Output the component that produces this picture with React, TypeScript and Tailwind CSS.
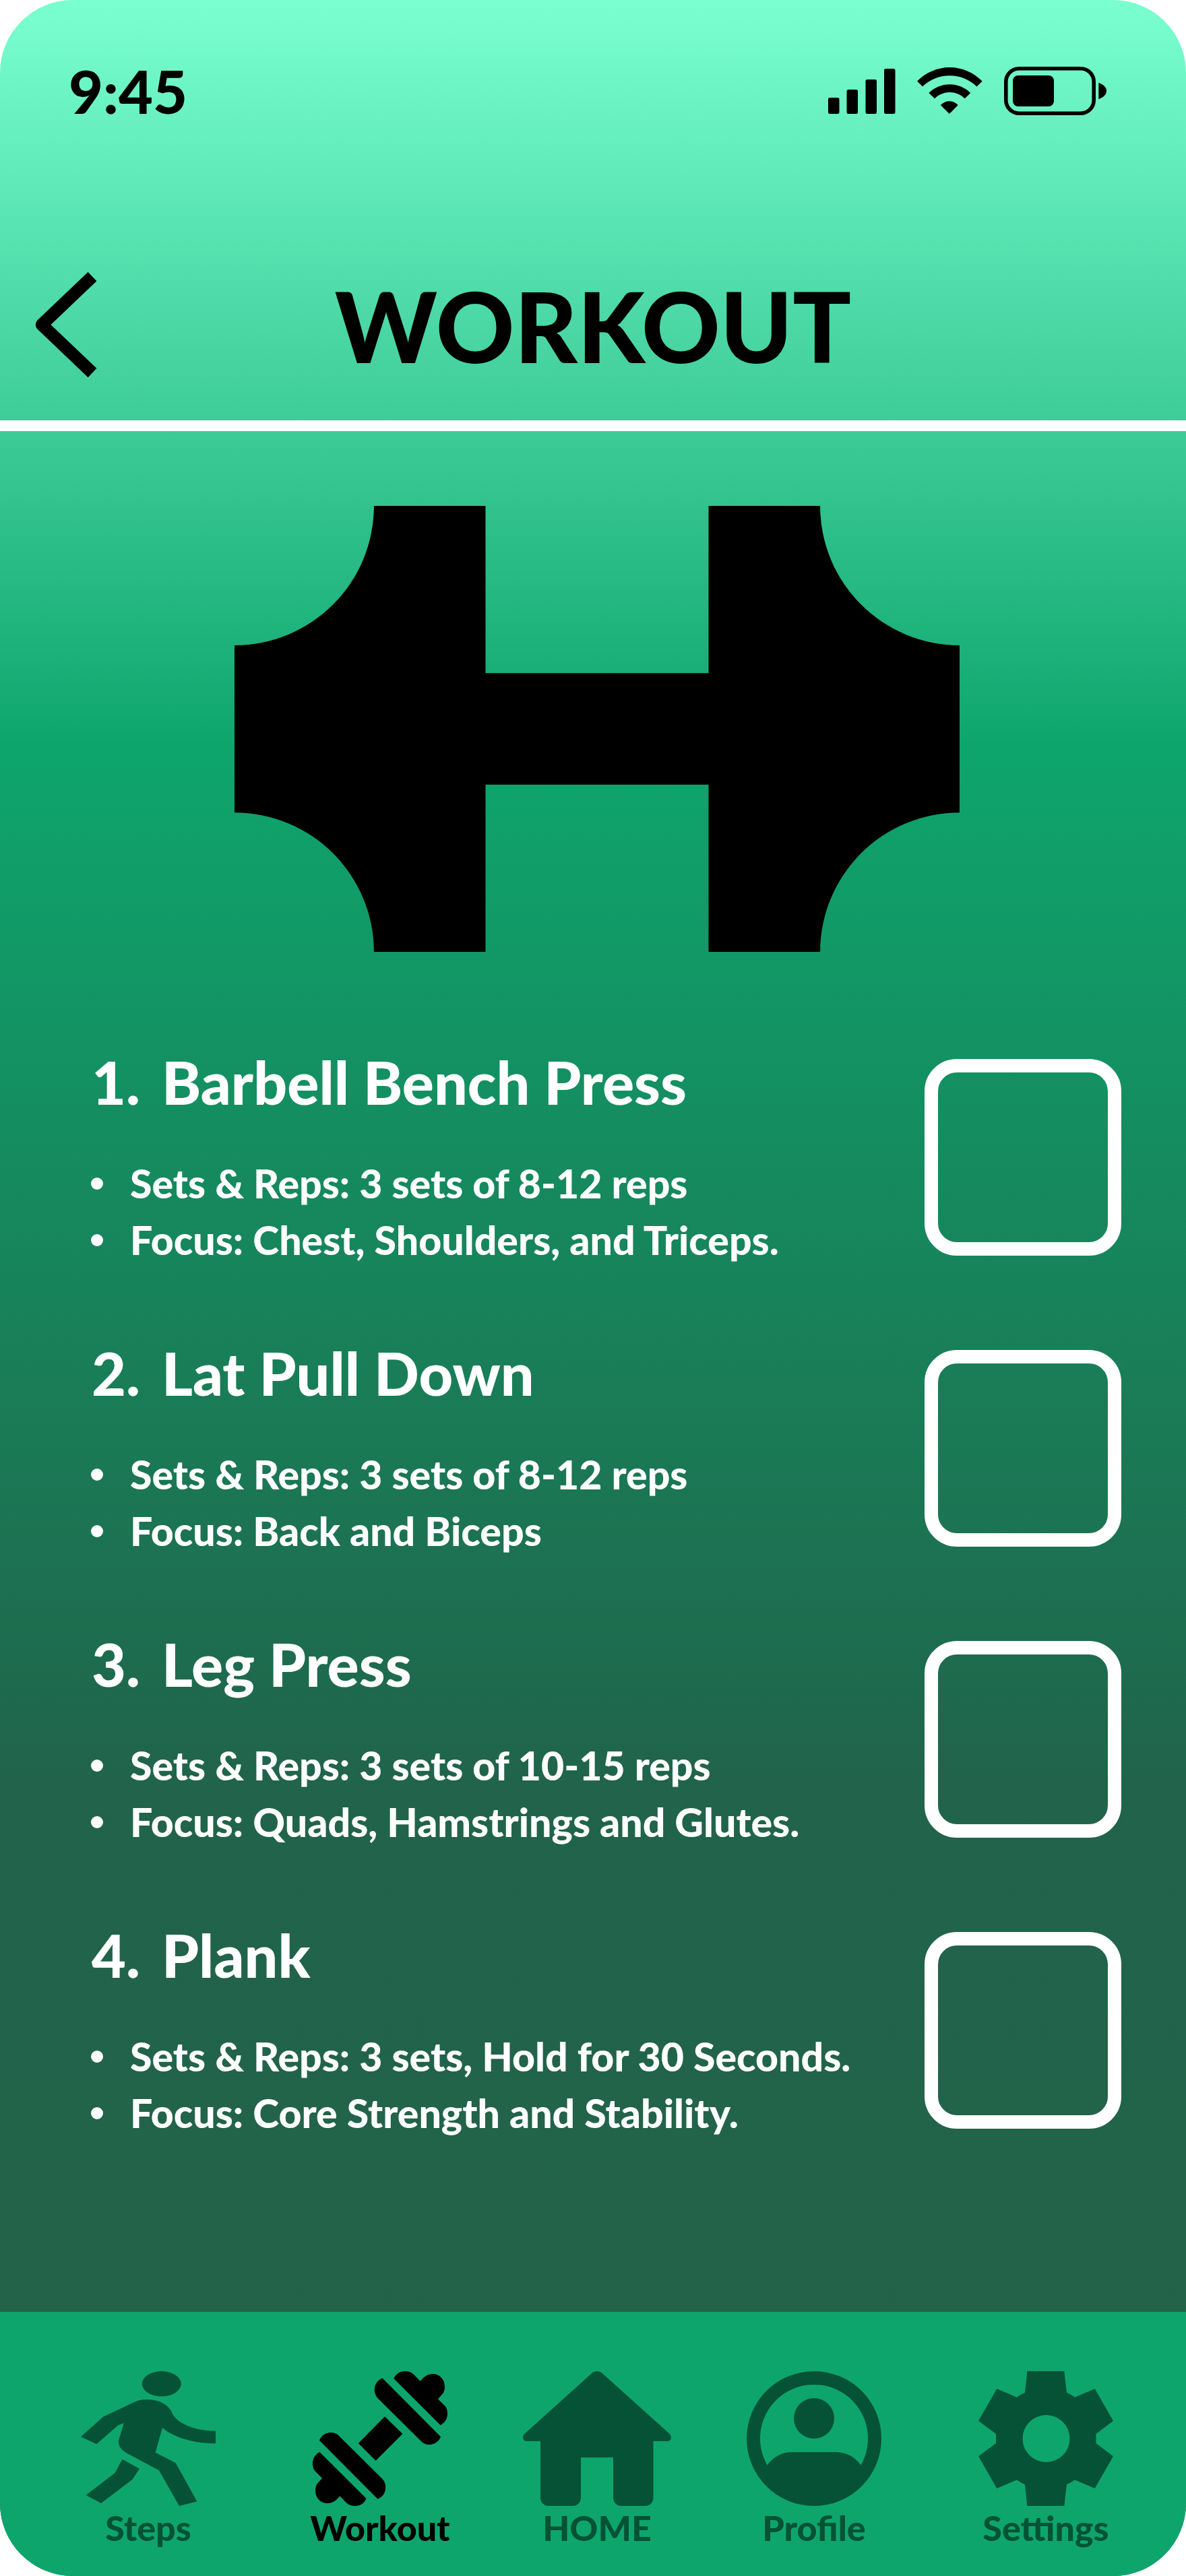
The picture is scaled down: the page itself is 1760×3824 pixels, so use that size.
import { useState, type ReactNode } from "react";

type Exercise = { name: string; sets: string; focus: string };

const exercises: Exercise[] = [
  { name: "Barbell Bench Press", sets: "Sets & Reps: 3 sets of 8-12 reps", focus: "Focus: Chest, Shoulders, and Triceps." },
  { name: "Lat Pull Down", sets: "Sets & Reps: 3 sets of 8-12 reps", focus: "Focus: Back and Biceps" },
  { name: "Leg Press", sets: "Sets & Reps: 3 sets of 10-15 reps", focus: "Focus: Quads, Hamstrings and Glutes." },
  { name: "Plank", sets: "Sets & Reps: 3 sets, Hold for 30 Seconds.", focus: "Focus: Core Strength and Stability." },
];

function SignalIcon() {
  return (
    <svg aria-hidden="true" viewBox="0 0 100 68" className="h-[68px] w-[100px]" fill="currentColor">
      <rect x="0" y="44" width="16.5" height="24" rx="2.5" />
      <rect x="27.5" y="32" width="16.5" height="36" rx="2.5" />
      <rect x="55.5" y="17" width="16.5" height="51" rx="2.5" />
      <rect x="83" y="1" width="16.5" height="67" rx="2.5" />
    </svg>
  );
}

function WifiIcon() {
  return (
    <svg aria-hidden="true" viewBox="0 0 97 70" className="h-[70px] w-[97px]" fill="currentColor">
      <path d="M0 20.6C13 7.5 30 0 48.3 0S83.6 7.5 96.6 20.6L88.5 28.6C77.5 18 63.5 12.3 48.3 12.3S19 18 8 28.6Z" />
      <path d="M17.4 38C25.5 30 36.5 25.3 48.3 25.3S71 30 79.2 38L70.7 46.3C64.8 40.4 57 37 48.3 37S32 40.4 26 46.3Z" />
      <path d="M34.8 56C38.4 52.2 43 50.2 47.9 50.2S57.2 52.2 60.7 56L47.9 69Z" />
    </svg>
  );
}

function BatteryIcon() {
  return (
    <svg aria-hidden="true" viewBox="0 0 152 72" className="h-[72px] w-[152px]" fill="currentColor">
      <rect x="2.8" y="2.8" width="130.4" height="66.4" rx="19.5" fill="none" stroke="currentColor" strokeWidth="5.6" />
      <rect x="13" y="13" width="61" height="46" rx="8" />
      <path d="M140.3 24C147 26 152 30.5 152 36S147 46 140.3 48Z" />
    </svg>
  );
}

function BarbellArt() {
  return (
    <svg role="img" aria-label="Barbell" viewBox="0 0 26 16" className="w-[1076px] max-w-full" fill="currentColor">
      <path d="M5 0H9V6H17V0H21A5 5 0 0 0 26 5V11A5 5 0 0 0 21 16H17V10H9V16H5A5 5 0 0 0 0 11V5A5 5 0 0 0 5 0Z" />
    </svg>
  );
}

function StepsIcon() {
  return (
    <svg aria-hidden="true" viewBox="0 0 200 200" className="size-[200px]" fill="currentColor">
      <ellipse cx="119.7" cy="18.7" rx="29" ry="18.7" />
      <path d="M0 97.3L33 67.7L79 46C84 43.5 90 42 98 42C117 42 130 50 135 61C140 75 165 88.7 200 88.7V107.3C165 107.3 135 97 121 83.7L110.7 120.7L140.7 136.3L172.4 193.3L146 200L116 147.3L67 121C59 116 55 110 56 103L63.9 76.7L54.5 80.7L23.3 108.3Z" />
      <path d="M61.6 130.7L87 144.7L76.4 160.7L30 196L7.6 184L50.5 151Z" />
    </svg>
  );
}

function DumbbellIcon() {
  return (
    <svg aria-hidden="true" viewBox="0 0 200 200" className="size-[200px]" fill="currentColor">
      <defs>
        <g id="dumbbell-end">
          <path d="M120.4 11C123 4.5 129 0 137 0C142.5 0 147 1.8 150.3 5L159.7 14.7L164 10C168 6 173 4 178 4C188.5 4 196 12 196 23C196 28 194.8 31.5 192 34.5L186 41.3L196.5 51.7C199 54.5 200 58.500 200 63.3C200 70.5 196 77 189.6 80Z" />
          <path d="M103.5 10.3C96 13.5 91.8 19.5 91.8 27.5C91.8 32.5 93.5 37 97.2 40.7L162 105C165 107.6 168.5 109 173 109C181 109 187.5 104 190 97.3Z" />
        </g>
      </defs>
      <use href="#dumbbell-end" />
      <use href="#dumbbell-end" transform="rotate(180 100 100)" />
      <path d="M107 67.3L133.4 93L93.6 132.7L67.8 107Z" />
    </svg>
  );
}

function HomeIcon() {
  return (
    <svg aria-hidden="true" viewBox="0 0 220 200" className="h-[200px] w-[220px]" fill="currentColor">
      <path d="M102 3.3C106.5 -1.1 113.5 -1.1 118 3.3L218 93.3C221.5 98 220 103.7 214 103.7H193.5V188A12 12 0 0 1 181.5 200H146A12 12 0 0 1 134 188V128H86V188A12 12 0 0 1 74 200H38A12 12 0 0 1 26 188V103.7H6C0 103.7 -1.5 98 2 93.3Z" />
    </svg>
  );
}

function ProfileIcon() {
  return (
    <svg aria-hidden="true" viewBox="0 0 200 200" className="size-[200px]" fill="currentColor">
      <path
        fillRule="evenodd"
        d="M100 0A100 100 0 1 1 100 200A100 100 0 1 1 100 0ZM30.5 139.5C39 127.5 52 120 68 120H132C148 120 161 127.5 169.5 139.5A80 80 0 1 0 30.5 139.5Z"
      />
      <circle cx="100" cy="70" r="30" />
    </svg>
  );
}

function SettingsIcon() {
  return (
    <svg aria-hidden="true" viewBox="0 0 200 200" className="size-[200px]" fill="currentColor">
      <path
        fillRule="evenodd"
        d="M72.3 0H127.3L131 31.7Q137.5 34.5 143 38.7L172.7 26L200 73.7L174.5 93V107L200 126.3L172.7 174L143 161.3Q137.5 165.5 131 168.3L127.3 200H72.3L69 168.3Q62.5 165.5 57 161.3L27.3 174L0 126.3L26 107V93L0 73.7L27.3 26L57 38.7Q62.5 34.5 69 31.7ZM100.5 65A35 35 0 1 0 100.5 135A35 35 0 1 0 100.5 65Z"
      />
    </svg>
  );
}

function NavItem({ label, active = false, children }: { label: string; active?: boolean; children: ReactNode }) {
  return (
    <a
      href="#"
      aria-current={active ? "page" : undefined}
      className={
        active
          ? "flex flex-col items-center gap-1.5 text-black"
          : "flex flex-col items-center gap-1.5 text-[#055236]"
      }
    >
      {children}
      <span className="text-[52px] leading-[52px] font-black">{label}</span>
    </a>
  );
}

function ExerciseRow({ number, exercise }: { number: number; exercise: Exercise }) {
  const [done, setDone] = useState(false);
  const id = `exercise-${number}`;
  return (
    <li className="flex items-start justify-between">
      <div>
        <h2>
          <label htmlFor={id} className="flex gap-8 text-[88px] leading-[100px] font-black">
            <span className="w-[73px] text-right">{number}.</span>
            <span>{exercise.name}</span>
          </label>
        </h2>
        <ul className="mt-[59px] text-[59px] leading-[84px] font-black">
          {[exercise.sets, exercise.focus].map((line) => (
            <li key={line} className="flex items-center gap-10">
              <span className="size-[18px] shrink-0 rounded-full bg-white" />
              {line}
            </li>
          ))}
        </ul>
      </div>
      <input
        id={id}
        type="checkbox"
        checked={done}
        onChange={(event) => setDone(event.target.checked)}
        className="mt-4 size-[292px] shrink-0 appearance-none rounded-[48px] border-[20px] border-white checked:bg-white"
      />
    </li>
  );
}

export default function App() {
  return (
    <div className="min-h-screen bg-white font-['Lato',sans-serif]">
      <div className="flex min-h-screen flex-col overflow-hidden rounded-[108px] bg-[linear-gradient(180deg,#7affd1_0%,#0ea56d_29%,#20644b_69%,#25624a_100%)] text-black">
        <header className="border-b-[16px] border-white pb-15">
          <div className="flex items-center justify-between pt-[93px] pr-[118px] pl-[102px]">
            <time className="text-[88px] leading-[84px] font-black">9:45</time>
            <div className="flex items-center gap-8">
              <SignalIcon />
              <WifiIcon />
              <BatteryIcon />
            </div>
          </div>
          <div className="mt-[227px] grid grid-cols-[1fr_auto_1fr] items-start px-[51px]">
            <button type="button" aria-label="Back" className="justify-self-start">
              <svg aria-hidden="true" viewBox="0 0 93 156" className="h-[156px] w-[93px]" fill="none">
                <path d="M86 6.5L11 78L86 149.5" stroke="currentColor" strokeWidth="18.5" strokeLinejoin="round" />
              </svg>
            </button>
            <h1 className="text-[144px] leading-[160px] font-black">WORKOUT</h1>
          </div>
        </header>

        <main className="flex-1">
          <div className="flex justify-center pt-[111px] pl-3">
            <BarbellArt />
          </div>
          <ol className="mt-[143px] flex flex-col gap-[105px] pr-24 pl-[135px] text-white">
            {exercises.map((exercise, index) => (
              <ExerciseRow key={exercise.name} number={index + 1} exercise={exercise} />
            ))}
          </ol>
        </main>

        <nav
          aria-label="Main"
          className="grid grid-cols-[344fr_344fr_300fr_344fr_344fr] bg-[#0ea56d] pt-22 pr-9 pb-[46px] pl-12"
        >
          <NavItem label="Steps">
            <StepsIcon />
          </NavItem>
          <NavItem label="Workout" active>
            <DumbbellIcon />
          </NavItem>
          <NavItem label="HOME">
            <HomeIcon />
          </NavItem>
          <NavItem label="Profile">
            <ProfileIcon />
          </NavItem>
          <NavItem label="Settings">
            <SettingsIcon />
          </NavItem>
        </nav>
      </div>
    </div>
  );
}
